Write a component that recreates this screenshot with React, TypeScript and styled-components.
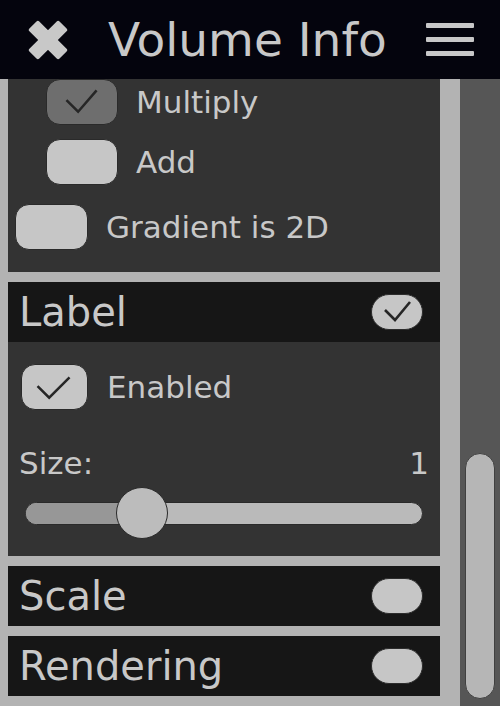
import React from "react";
import styled, { createGlobalStyle } from "styled-components";

const GlobalStyle = createGlobalStyle`
  html, body { margin: 0; padding: 0; background: #b3b3b3; }
  body { font-family: "DejaVu Sans", "Liberation Sans", sans-serif; }
  * { box-sizing: border-box; }
`;

const Screen = styled.div`
  width: 500px;
  height: 706px;
  display: flex;
  flex-direction: column;
  overflow: hidden;
  background: #b3b3b3;
`;

const Header = styled.header`
  height: 79px;
  flex: none;
  background: #04040d;
  display: flex;
  align-items: center;
  padding: 0 26px 0 28px;
`;

const CloseIcon = styled.svg`
  width: 40px;
  height: 40px;
  flex: none;
`;

const Title = styled.h1`
  margin: 0 0 0 40px;
  flex: 1;
  font-size: 47px;
  font-weight: 400;
  color: #c8c8c8;
  line-height: 1;
  white-space: nowrap;
`;

const Menu = styled.div`
  width: 48px;
  display: flex;
  flex-direction: column;
  gap: 9px;
`;

const MenuBar = styled.span`
  display: block;
  height: 5px;
  background: #c8c8c8;
  border-radius: 1px;
`;

const Body = styled.div`
  flex: 1;
  display: flex;
  overflow: hidden;
`;

const Content = styled.div`
  width: 432px;
  margin-left: 8px;
  display: flex;
  flex-direction: column;
  gap: 10px;
`;

const Panel = styled.section<{ $pt?: number; $pb?: number }>`
  background: #333333;
  display: flex;
  flex-direction: column;
  padding-top: ${(p) => p.$pt ?? 0}px;
  padding-bottom: ${(p) => p.$pb ?? 0}px;
`;

const SectionHeader = styled.div`
  height: 60px;
  background: #161616;
  display: flex;
  align-items: center;
  justify-content: space-between;
  padding: 0 17px 0 11px;
`;

const SectionTitle = styled.span`
  font-size: 40px;
  color: #c8c8c8;
  line-height: 1;
`;

const Toggle = styled.div`
  width: 52px;
  height: 36px;
  border-radius: 18px;
  background: #c6c6c6;
  border: 1px solid #2c2c2c;
  display: flex;
  align-items: center;
  justify-content: center;
`;

const CheckRow = styled.label<{ $indent: number; $mt?: number; $gap?: number }>`
  display: flex;
  align-items: center;
  gap: ${(p) => p.$gap ?? 18}px;
  margin-left: ${(p) => p.$indent}px;
  margin-top: ${(p) => p.$mt ?? 0}px;
`;

const CheckBox = styled.div<{ $w: number; $dim?: boolean }>`
  width: ${(p) => p.$w}px;
  height: 46px;
  border-radius: 14px;
  background: ${(p) => (p.$dim ? "#6e6e6e" : "#c6c6c6")};
  border: 1px solid #2a2a2a;
  display: flex;
  align-items: center;
  justify-content: center;
  flex: none;
`;

const RowLabel = styled.span`
  font-size: 31px;
  color: #c8c8c8;
  line-height: 1;
`;

const ValueRow = styled.div`
  display: flex;
  justify-content: space-between;
  align-items: baseline;
  padding: 0 11px 0 11px;
  margin-top: 35px;
  font-size: 31px;
  color: #c8c8c8;
  line-height: 36px;
`;

const SliderWrap = styled.div`
  margin: 6px 17px 0 17px;
  height: 52px;
  position: relative;
  display: flex;
  align-items: center;
`;

const Track = styled.div`
  flex: 1;
  height: 23px;
  border-radius: 12px;
  background: #bababa;
  border: 1px solid #2a2a2a;
  overflow: hidden;
`;

const Fill = styled.div`
  height: 100%;
  background: #979797;
`;

const Thumb = styled.div`
  position: absolute;
  top: 0;
  width: 52px;
  height: 52px;
  border-radius: 50%;
  background: #bcbcbc;
  border: 1px solid #2a2a2a;
`;

const ScrollTrack = styled.div`
  width: 40px;
  margin-left: 20px;
  background: #565656;
  padding: 374px 5px 7px 5px;
  display: flex;
`;

const ScrollThumb = styled.div`
  flex: 1;
  border-radius: 15px;
  background: #b6b6b6;
  border: 1px solid #404040;
`;

const Check: React.FC<{ w: number; h: number; pts: string }> = ({ w, h, pts }) => (
  <svg width={w} height={h} viewBox={`0 0 ${w} ${h}`} style={{ display: "block" }}>
    <polyline points={pts} fill="none" stroke="#262626" strokeWidth={2.6} strokeLinejoin="miter" />
  </svg>
);

export default function App() {
  const sliderValue = 0.25;
  return (
    <Screen>
      <GlobalStyle />
      <Header>
        <CloseIcon viewBox="0 0 40 40">
          <g fill="#c8c8c8" transform="rotate(45 20 20)">
            <rect x={-1.3} y={13} width={42.6} height={14} rx={2} />
            <rect x={13} y={-1.3} width={14} height={42.6} rx={2} />
          </g>
        </CloseIcon>
        <Title>Volume Info</Title>
        <Menu>
          <MenuBar />
          <MenuBar />
          <MenuBar />
        </Menu>
      </Header>
      <Body>
        <Content>
          <Panel $pb={22}>
            <CheckRow $indent={38}>
              <CheckBox $w={72} $dim>
                <Check w={72} h={46} pts="20,21 32,33 51,11" />
              </CheckBox>
              <RowLabel>Multiply</RowLabel>
            </CheckRow>
            <CheckRow $indent={38} $mt={14}>
              <CheckBox $w={72} />
              <RowLabel>Add</RowLabel>
            </CheckRow>
            <CheckRow $indent={7} $mt={19}>
              <CheckBox $w={73} />
              <RowLabel>Gradient is 2D</RowLabel>
            </CheckRow>
          </Panel>

          <Panel $pb={17}>
            <SectionHeader>
              <SectionTitle>Label</SectionTitle>
              <Toggle>
                <Check w={30} h={24} pts="3,10 13,20 28,2" />
              </Toggle>
            </SectionHeader>
            <CheckRow $indent={13} $mt={22} $gap={19}>
              <CheckBox $w={67}>
                <Check w={67} h={46} pts="16,22 28,34 49,13" />
              </CheckBox>
              <RowLabel>Enabled</RowLabel>
            </CheckRow>
            <ValueRow>
              <span>Size:</span>
              <span>1</span>
            </ValueRow>
            <SliderWrap>
              <Track>
                <Fill style={{ width: `${sliderValue * 100 + 4}%` }} />
              </Track>
              <Thumb style={{ left: 91 }} />
            </SliderWrap>
          </Panel>

          <Panel>
            <SectionHeader>
              <SectionTitle>Scale</SectionTitle>
              <Toggle />
            </SectionHeader>
          </Panel>

          <Panel>
            <SectionHeader>
              <SectionTitle>Rendering</SectionTitle>
              <Toggle />
            </SectionHeader>
          </Panel>
        </Content>
        <ScrollTrack>
          <ScrollThumb />
        </ScrollTrack>
      </Body>
    </Screen>
  );
}
